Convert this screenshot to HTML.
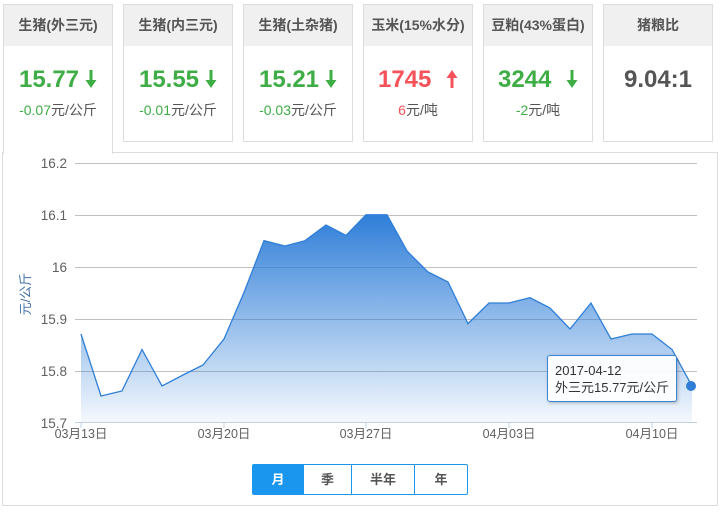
<!DOCTYPE html>
<html><head><meta charset="utf-8">
<style>
*{margin:0;padding:0;box-sizing:border-box}
body{width:722px;height:512px;background:#fff;font-family:"Liberation Sans","Noto Sans CJK SC",sans-serif;position:relative;overflow:hidden}
.card{position:absolute;top:4px;width:110px;height:138px;border:1px solid #ddd;background:#fff;text-align:center}
.card .h{height:41px;background:#f0f0f0;line-height:41px;font-size:14px;font-weight:bold;color:#555}
.card .v{margin-top:21px;font-size:24px;font-weight:bold;line-height:26px}
.card .s{margin-top:7px;font-size:14px;color:#555}
.g{color:#3fad46}.r{color:#f5525a}
.arr{display:inline-block;margin-left:6px;vertical-align:-1px}
.panel{position:absolute;left:2px;top:152px;width:716px;height:354px;border:1px solid #ddd}
.c1{height:150px;border-bottom:none;z-index:2}
.btns{position:absolute;left:252px;top:464px;width:216px;height:31px;border:1px solid #1a96ef;border-radius:2px;display:flex;font-size:13px;font-weight:bold;color:#555}
.btns div{line-height:29px;text-align:center;border-left:1px solid #1a96ef}
.btns div:first-child{border-left:none;background:#1a96ef;color:#fff}
.tip{position:absolute;left:547px;top:355px;width:130px;height:47px;border:1px solid #3a84d8;border-radius:3px;background:rgba(255,255,255,.92);box-shadow:1px 1px 3px rgba(0,0,0,.25);font-size:13px;color:#333;padding:6px 0 0 7px;line-height:17px}
</style></head><body>
<div class="panel"></div>
<div class="card c1" style="left:3px"><div class="h">生猪(外三元)</div><div class="v g">15.77<svg class="arr" width="12" height="18" viewBox="0 0 12 18"><path d="M4.5 0h3v10h4L6 18 0.5 10h4z" fill="#3fad46"/></svg></div><div class="s"><span class="g">-0.07</span>元/公斤</div></div>
<div class="card" style="left:123px"><div class="h">生猪(内三元)</div><div class="v g">15.55<svg class="arr" width="12" height="18" viewBox="0 0 12 18"><path d="M4.5 0h3v10h4L6 18 0.5 10h4z" fill="#3fad46"/></svg></div><div class="s"><span class="g">-0.01</span>元/公斤</div></div>
<div class="card" style="left:243px"><div class="h">生猪(土杂猪)</div><div class="v g">15.21<svg class="arr" width="12" height="18" viewBox="0 0 12 18"><path d="M4.5 0h3v10h4L6 18 0.5 10h4z" fill="#3fad46"/></svg></div><div class="s"><span class="g">-0.03</span>元/公斤</div></div>
<div class="card" style="left:363px"><div class="h">玉米(15%水分)</div><div class="v r">1745 <svg class="arr" style="margin-left:8px" width="12" height="18" viewBox="0 0 12 18"><path d="M4.5 18h3V8h4L6 0 0.5 8h4z" fill="#f5525a"/></svg></div><div class="s"><span class="r">6</span>元/吨</div></div>
<div class="card" style="left:483px"><div class="h">豆粕(43%蛋白)</div><div class="v g">3244 <svg class="arr" style="margin-left:8px" width="12" height="18" viewBox="0 0 12 18"><path d="M4.5 0h3v10h4L6 18 0.5 10h4z" fill="#3fad46"/></svg></div><div class="s"><span class="g">-2</span>元/吨</div></div>
<div class="card" style="left:603px"><div class="h">猪粮比</div><div class="v" style="color:#555">9.04:1</div></div>
<svg style="position:absolute;left:0;top:0" width="722" height="512">
<defs><linearGradient id="gr" x1="0" y1="0" x2="0" y2="1"><stop offset="0" stop-color="#2f7ed8"/><stop offset="1" stop-color="#2f7ed8" stop-opacity="0.05"/></linearGradient></defs>
<g stroke="#c0c0c0" stroke-width="1">
<line x1="75" y1="163.5" x2="697" y2="163.5"/><line x1="75" y1="215.5" x2="697" y2="215.5"/><line x1="75" y1="267.5" x2="697" y2="267.5"/><line x1="75" y1="319.5" x2="697" y2="319.5"/><line x1="75" y1="371.5" x2="697" y2="371.5"/>
</g>
<polygon fill="url(#gr)" points="81,422 81,334 101,396 122,391 142,349.5 162,386 183,375 203,365 224,339 244,292.5 264,240.7 285,246 305,240.7 326,225 346,235.5 366,214.8 387,214.8 407,251 428,272 448,282 468,323.6 489,303 509,303 530,297.7 550,308 570,329 591,303 611,339 632,334 652,334 672,349.5 692,386 692,422"/>
<polyline fill="none" stroke="#2f7ed8" stroke-width="1.3" points="81,334 101,396 122,391 142,349.5 162,386 183,375 203,365 224,339 244,292.5 264,240.7 285,246 305,240.7 326,225 346,235.5 366,214.8 387,214.8 407,251 428,272 448,282 468,323.6 489,303 509,303 530,297.7 550,308 570,329 591,303 611,339 632,334 652,334 672,349.5 692,386"/>
<line x1="75" y1="422.5" x2="697" y2="422.5" stroke="#c0d0e0"/>
<g stroke="#c0d0e0"><line x1="81" y1="422" x2="81" y2="428"/><line x1="224" y1="422" x2="224" y2="428"/><line x1="366" y1="422" x2="366" y2="428"/><line x1="509" y1="422" x2="509" y2="428"/><line x1="652" y1="422" x2="652" y2="428"/></g>
<circle cx="691" cy="386" r="5" fill="#2f7ed8"/>
<g font-size="13.5" fill="#606060" text-anchor="end" font-family="Liberation Sans,sans-serif">
<text x="67" y="168">16.2</text><text x="67" y="220">16.1</text><text x="67" y="272">16</text><text x="67" y="324">15.9</text><text x="67" y="376">15.8</text><text x="67" y="428">15.7</text>
</g>
<g font-size="12.5" fill="#606060" text-anchor="middle" font-family="Liberation Sans,Noto Sans CJK SC,sans-serif">
<text x="81" y="438">03月13日</text><text x="224" y="438">03月20日</text><text x="366" y="438">03月27日</text><text x="509" y="438">04月03日</text><text x="652" y="438">04月10日</text>
</g>
<text transform="translate(30,294) rotate(-90)" font-size="13" fill="#4572a7" text-anchor="middle" font-family="Liberation Sans,Noto Sans CJK SC,sans-serif">元/公斤</text>
</svg>
<div class="tip">2017-04-12<br>外三元15.77元/公斤</div>
<div class="btns"><div style="width:50px">月</div><div style="width:48px">季</div><div style="width:63px">半年</div><div style="width:53px">年</div></div>
</body></html>
